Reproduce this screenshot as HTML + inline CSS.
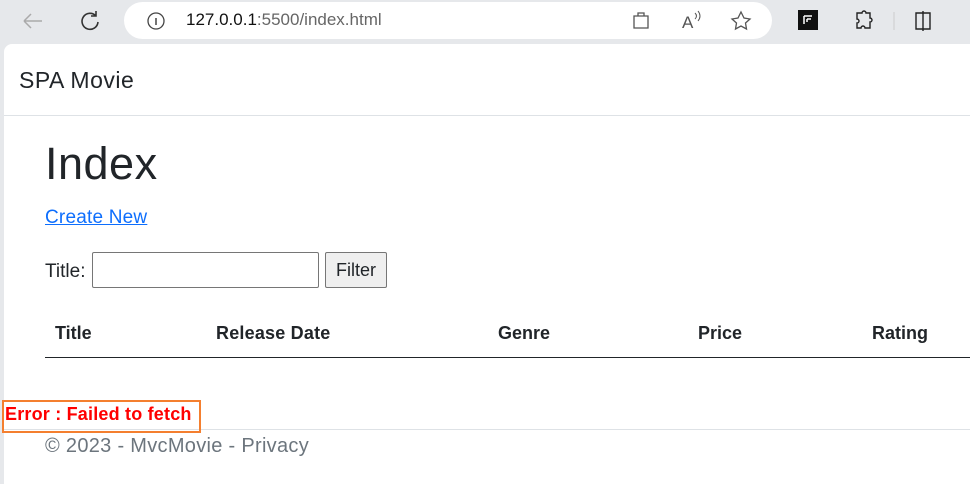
<!DOCTYPE html>
<html><head><meta charset="utf-8"><style>
*{margin:0;padding:0;box-sizing:border-box}
body{width:970px;height:481px;overflow:hidden;background:#e6e8eb;font-family:"Liberation Sans",sans-serif;position:relative;color:#212529}
.abs{position:absolute}
#page{position:absolute;left:4px;top:44px;width:970px;height:440px;background:#fff;border-top-left-radius:8px}
.url{left:124px;top:2px;width:648px;height:37px;background:#fff;border-radius:19px}
.t{position:absolute;white-space:nowrap}
</style></head><body>
<svg class="abs" style="left:0;top:0" width="970" height="44">
<path d="M42 21H24M24 21l7-7M24 21l7 7" stroke="#aaa" stroke-width="1.5" fill="none"/>
<path d="M96 16a8 8 0 1 0 2 6M96 11v5h-5" stroke="#333" stroke-width="1.6" fill="none"/>
</svg>
<div class="abs url"></div>
<svg class="abs" style="left:0;top:0" width="970" height="44">
<circle cx="156" cy="21" r="8" stroke="#444" stroke-width="1.3" fill="none"/>
<path d="M156 18v7" stroke="#444" stroke-width="1.5"/>
<path d="M634 16h14v12h-14zM638 16v-3h6v3" stroke="#555" stroke-width="1.3" fill="none"/>
<text x="682" y="28" font-family="Liberation Sans" font-size="17" fill="#555">A</text>
<path d="M695 13q3 3 0 6M698 11q4 5 0 10" stroke="#555" stroke-width="1" fill="none"/>
<path d="M741 12l3 6 6 1-4.5 4 1 6-5.5-3-5.5 3 1-6-4.5-4 6-1z" stroke="#555" stroke-width="1.3" fill="none"/>
<rect x="798" y="10" width="20" height="20" fill="#111"/>
<path d="M804 16h8M804 16v8M807 19h4M807 19v3" stroke="#fff" stroke-width="1.5"/>
<path d="M857 13h5a2 2 0 0 1 4 0h4v5a2 2 0 0 1 0 4v6h-5a2 2 0 0 0-4 0h-4v-5a2 2 0 0 0 0-4z" stroke="#222" stroke-width="1.4" fill="none"/>
<path d="M894 12v18" stroke="#ccc"/>
<path d="M916 13h14v16h-14zM923 11v20" stroke="#222" stroke-width="1.4" fill="none"/>
</svg>
<div class="t" style="left:186px;top:10px;font-size:17px;color:#111">127.0.0.1<span style="color:#666">:5500/index.html</span></div>
<div id="page"></div>
<div class="abs" style="left:4px;top:115px;width:966px;height:1px;background:#dee2e6"></div>
<div class="t" style="left:19px;top:67px;font-size:23px;letter-spacing:0.5px;color:#212529">SPA Movie</div>
<div class="t" style="left:45px;top:138px;font-size:45px;font-weight:500;letter-spacing:0.5px">Index</div>
<div class="t" style="left:45px;top:207px;font-size:19px;letter-spacing:0.2px;color:#0d6efd;text-decoration:underline">Create New</div>
<div class="t" style="left:45px;top:261px;font-size:19px">Title:</div>
<div class="abs" style="left:92px;top:252px;width:227px;height:36px;border:1px solid #767676;border-radius:2px"></div>
<div class="abs" style="left:325px;top:252px;width:62px;height:36px;border:1px solid #767676;border-radius:2px;background:#efefef;font-size:18px;text-align:center;line-height:34px">Filter</div>
<div class="t" style="left:55px;top:323px;font-size:18px;font-weight:bold">Title</div>
<div class="t" style="left:216px;top:323px;font-size:18px;font-weight:bold;letter-spacing:0.2px">Release Date</div>
<div class="t" style="left:498px;top:323px;font-size:18px;font-weight:bold">Genre</div>
<div class="t" style="left:698px;top:323px;font-size:18px;font-weight:bold">Price</div>
<div class="t" style="left:872px;top:323px;font-size:18px;font-weight:bold">Rating</div>
<div class="abs" style="left:45px;top:357px;width:925px;height:1px;background:#212529"></div>
<div class="abs" style="left:4px;top:429px;width:966px;height:1px;background:#dee2e6"></div>
<div class="abs" style="left:2px;top:400px;width:199px;height:33px;border:2px solid #f47f2f"></div>
<div class="t" style="left:5px;top:404px;font-size:18px;font-weight:bold;letter-spacing:0.2px;color:#f00">Error : Failed to fetch</div>
<div class="t" style="left:45px;top:435px;font-size:20px;letter-spacing:0.3px;color:#6c757d">© 2023 - MvcMovie - Privacy</div>
</body></html>
